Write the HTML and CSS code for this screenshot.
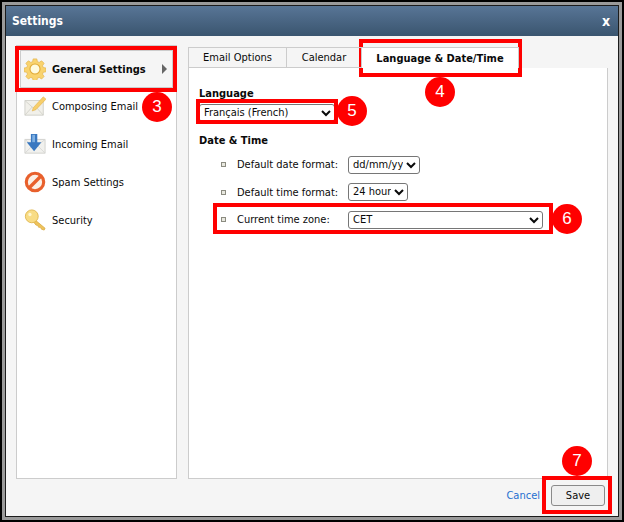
FILE: index.html
```html
<!DOCTYPE html>
<html lang="en">
<head>
<meta charset="utf-8">
<title>Settings</title>
<link rel="stylesheet" href="styles.css">
</head>
<body>
<div class="frame">
  <div class="dialog">
    <header class="titlebar"><span class="title">Settings</span><span class="close">x</span></header>
    <div class="columns">
      <nav class="sidebar">
        <div class="nav-item selected">
          <svg class="icon" viewBox="0 0 24 24"><path d="M10 1h4l.6 3 2 .8 2.6-1.7 2.700 2.700-1.700 2.600.8 2 3 .6v4l-3 .6-.8 2 1.700 2.600-2.700 2.700-2.600-1.700-2 .8-.6 3h-4l-.6-3-2-.8-2.600 1.700-2.700-2.700 1.700-2.600-.8-2-3-.6v-4l3-.6.8-2-1.700-2.600 2.700-2.700 2.600 1.700 2-.8z" fill="#f9d36e" stroke="#e3b54e" stroke-width=".8"/><circle cx="12" cy="12" r="5.500" fill="#fffbe0" stroke="#e0aa38" stroke-width="1.200"/></svg>
          <span class="nav-label">General Settings</span>
          <span class="arrow"></span>
        </div>
        <div class="nav-item">
          <svg class="icon" viewBox="0 0 24 24"><path d="M1 6h20v16H1z" fill="#f1f0ea" stroke="#cfcfc8"/><path d="M1 6l10 9 10-9M1 22l8-9M21 22l-8-9" fill="none" stroke="#d2d2ca"/><path d="M10 14l11-12 3 2.500-11 11.500-4 1.500z" fill="#f7cf6b" stroke="#e2b04a" stroke-width=".6"/></svg>
          <span class="nav-label">Composing Email</span>
        </div>
        <div class="nav-item">
          <svg class="icon" viewBox="0 0 24 24"><path d="M1 7h22v15H1z" fill="#f1f1ee" stroke="#d0d0cc"/><path d="M1 7l11 9 11-9M1 22l8-8M23 22l-8-8" fill="none" stroke="#d8d8d4"/><path d="M7.500 1h7v9H19l-8 10-8-10h4.500z" fill="#3a78c0"/><path d="M9 2h3v8H9z" fill="#7fb0e2"/></svg>
          <span class="nav-label">Incoming Email</span>
        </div>
        <div class="nav-item">
          <svg class="icon" viewBox="0 0 24 24"><circle cx="12" cy="12" r="9.500" fill="#fbf0e6" stroke="#e8602c" stroke-width="3.400"/><path d="M6 18L18 6" stroke="#e8602c" stroke-width="3.600"/></svg>
          <span class="nav-label">Spam Settings</span>
        </div>
        <div class="nav-item">
          <svg class="icon" viewBox="0 0 24 24"><path d="M11 11l12 10-1 2-3-1-1-2-2 0-1-2-2-.5-3-4" fill="#eec35c" stroke="#d9a941" stroke-width=".8"/><circle cx="8.500" cy="8" r="7" fill="#f8dc85" stroke="#e0b74e"/><circle cx="6.500" cy="6" r="1.800" fill="#fff6cf"/></svg>
          <span class="nav-label">Security</span>
        </div>
      </nav>
      <main class="panel">
        <div class="tabs">
          <div class="tab tab-email">Email Options</div>
          <div class="tab tab-calendar">Calendar</div>
          <div class="tab tab-active">Language &amp; Date/Time</div>
        </div>
        <div class="tab-body">
          <h2 class="group first">Language</h2>
          <select class="select select-language"><option>Français (French)</option></select>
          <h2 class="group second">Date &amp; Time</h2>
          <div class="rows">
            <div class="row"><span class="bullet"></span><span class="row-label">Default date format:</span><select class="select select-date"><option>dd/mm/yy</option></select></div>
            <div class="row"><span class="bullet"></span><span class="row-label">Default time format:</span><select class="select select-time"><option>24 hour</option></select></div>
            <div class="row"><span class="bullet"></span><span class="row-label">Current time zone:</span><select class="select select-zone"><option>CET</option></select></div>
          </div>
        </div>
      </main>
    </div>
    <footer class="footer"><a class="cancel">Cancel</a><button class="save">Save</button></footer>
  </div>
  <div class="mark box-3"></div>
  <div class="mark box-4"></div>
  <div class="mark box-5"></div>
  <div class="mark box-6"></div>
  <div class="mark box-7"></div>
  <div class="badge badge-3">3</div>
  <div class="badge badge-4">4</div>
  <div class="badge badge-5">5</div>
  <div class="badge badge-6">6</div>
  <div class="badge badge-7">7</div>
</div>
</body>
</html>
```
FILE: styles.css
```css
* { box-sizing: border-box; }
html, body { margin: 0; padding: 0; }
body { width: 624px; height: 522px; overflow: hidden; font-family: "DejaVu Sans Condensed", "DejaVu Sans", sans-serif; font-stretch: condensed; font-size: 11px; color: #0a0a0a; }
.frame { position: relative; width: 624px; height: 522px; border: 2px solid #000; padding: 3px; background: #9a9a9a; }
.dialog { width: 614px; height: 512px; border: 1px solid #1c1c1c; background: #f5f5f5; display: flex; flex-direction: column; }
.titlebar { height: 30px; flex: none; padding: 0 8px 0 6px; display: flex; align-items: center; justify-content: space-between; background: linear-gradient(#587596, #3a556f); color: #fff; font-weight: bold; }
.title { font-size: 12px; }
.close { font-size: 14px; }
.columns { height: 443px; flex: none; display: flex; padding: 9px 9px 0 10px; gap: 11px; }
.sidebar { width: 161px; height: 434px; background: #fff; border: 1px solid #ccc; padding-top: 4px; }
.nav-item { height: 38px; display: flex; align-items: center; padding-left: 7px; gap: 6px; }
.nav-item.selected { margin: 0 3px -1px 3px; padding-left: 3px; border: 1px solid #ccc; background: #f5f5f5; }
.nav-item.selected .nav-label { font-weight: bold; }
.icon { width: 22px; height: 22px; flex: none; }
.arrow { margin-left: auto; margin-right: 5px; width: 0; height: 0; border-left: 5px solid #666; border-top: 5px solid transparent; border-bottom: 5px solid transparent; }
.panel { width: 420px; height: 432px; margin-top: 2px; display: flex; flex-direction: column; }
.tabs { height: 21px; flex: none; display: flex; position: relative; z-index: 1; }
.tab { height: 21px; display: flex; align-items: center; justify-content: center; border: 1px solid #ccc; border-left: 0; }
.tab-email { width: 99px; border-left: 1px solid #ccc; }
.tab-calendar { width: 75px; }
.tab-active { width: 157px; font-weight: bold; background: #fff; border-bottom: 0; }
.tab-body { flex: 1; background: #fff; border: 1px solid #ccc; border-top: 0; padding: 0 10px; }
.group { margin: 0; font-size: 11px; font-weight: bold; line-height: 14px; }
.first { padding-top: 19px; }
.second { margin-top: 12px; }
.select { display: block; height: 18px; font-family: inherit; font-stretch: inherit; font-size: 11px; color: #0a0a0a; background: #fff; border: 1px solid #767676; border-radius: 3px; padding: 0 0 2px; }
.select-language { width: 136px; margin-top: 3px; }
.select-date { width: 72px; }
.select-time { width: 60px; }
.select-zone { width: 195px; }
.rows { padding: 3px 0 0 22px; display: flex; flex-direction: column; }
.row { height: 27.500px; display: flex; align-items: center; }
.bullet { width: 5px; height: 5px; flex: none; border: 1px solid #8b8b80; background: #e8e8df; margin-right: 11px; }
.row-label { width: 111px; flex: none; }
.footer { flex: 1; display: flex; align-items: flex-start; justify-content: flex-end; padding: 6px 13px 0 0; gap: 11px; }
.cancel { color: #1f6fd0; line-height: 21px; }
.save { width: 54px; height: 21px; font-family: inherit; font-stretch: inherit; font-size: 11px; color: #0a0a0a; background: #efefef; border: 1px solid #8a8a8a; border-radius: 3px; padding: 0; }
.mark { position: absolute; border: 4px solid #f00; }
.box-3 { left: 13px; top: 44px; width: 162px; height: 46px; }
.box-4 { left: 357px; top: 37px; width: 163px; height: 38px; }
.box-5 { left: 194px; top: 97px; width: 142px; height: 25px; }
.box-6 { left: 211px; top: 201px; width: 340px; height: 31px; }
.box-7 { left: 540px; top: 474px; width: 70px; height: 38px; }
.badge { position: absolute; width: 30px; height: 30px; border-radius: 50%; background: #f00; color: #fff; font-family: "Liberation Sans", sans-serif; font-stretch: normal; font-size: 17px; line-height: 30px; text-align: center; }
.badge-3 { left: 140px; top: 90px; }
.badge-4 { left: 423px; top: 75px; }
.badge-5 { left: 335px; top: 94px; }
.badge-6 { left: 550px; top: 202px; }
.badge-7 { left: 560px; top: 444px; }
```
